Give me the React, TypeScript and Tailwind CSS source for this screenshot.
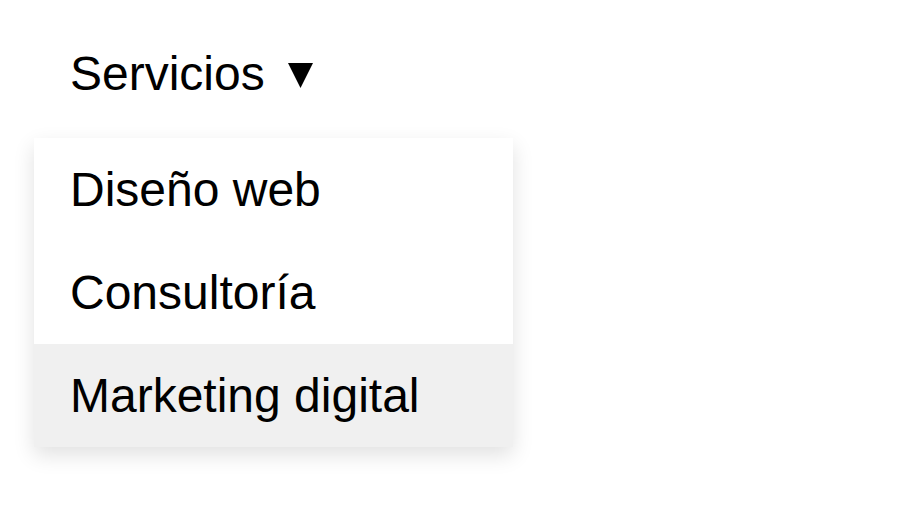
import React from "react";

export default function App() {
  const items = ["Diseño web", "Consultoría", "Marketing digital"];
  return (
    <div
      className="min-h-[507px] w-full bg-white pl-[34px] pt-[10px] text-black"
      style={{ fontFamily: '"Liberation Sans", Arial, sans-serif' }}
    >
      <div className="relative inline-block">
        <button className="flex items-center px-[36px] pt-[36px] pb-[37px] text-[48px] leading-[55px] text-black">
          <span>Servicios</span>
          <svg width="25" height="25" viewBox="0 0 25 25" className="ml-[23px] mt-[4px]">
            <polygon points="0,0 25,0 12.5,25" fill="#000" />
          </svg>
        </button>
        <div className="flex w-[479px] flex-col bg-white shadow-[0_8px_20px_rgba(0,0,0,0.12)]">
          {items.map((t, i) => (
            <a
              key={t}
              className={`block px-[36px] py-[24px] text-[48px] leading-[55px] text-black ${
                i === 2 ? "bg-[#f0f0f0]" : "bg-white"
              }`}
            >
              {t}
            </a>
          ))}
        </div>
      </div>
    </div>
  );
}
